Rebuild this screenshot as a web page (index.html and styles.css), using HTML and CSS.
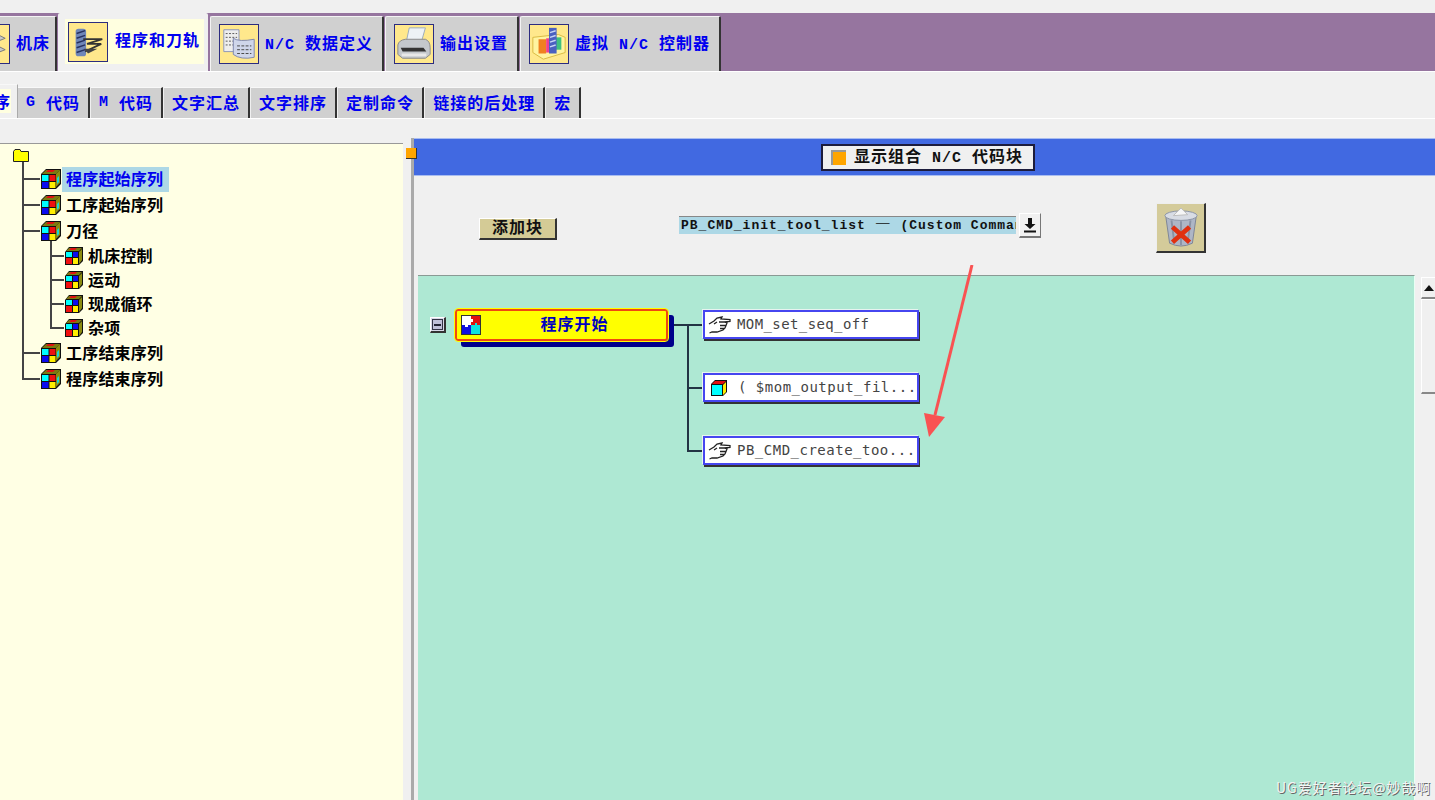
FILE: index.html
```html
<!DOCTYPE html>
<html lang="zh-CN">
<head>
    <meta charset="UTF-8">
    <meta name="viewport" content="width=device-width, initial-scale=1.0">
    <title>Post Builder</title>
    <link rel="stylesheet" href="styles.css">
</head>
<body>
    <svg class="defs" width="0" height="0">
        <symbol id="cube" viewBox="0 0 22 22">
            <path d="M1 6 6 1H21V16L16 21H1Z" fill="#111"/>
            <path d="M6 2h14l-4 4H2Z" fill="#7a7a10"/>
            <path d="M8 2h7l-2 2H6Z" fill="#e01010"/>
            <path d="M16 6l4-4v13l-4 4Z" fill="#8c8c10"/>
            <path d="M17 10l2-2v6l-2 2Z" fill="#18d8d8"/>
            <rect x="2" y="7" width="6.500" height="6" fill="#00ffff"/>
            <rect x="9.500" y="7" width="6" height="6" fill="#f01010"/>
            <rect x="2" y="14" width="6.500" height="6" fill="#0a0af0"/>
            <rect x="9.500" y="14" width="6" height="6" fill="#ffee00"/>
        </symbol>
        <symbol id="cube-small" viewBox="0 0 20 20">
            <path d="M1 6 5 1H19V15L15 19H1Z" fill="#111"/>
            <path d="M5 2h13l-3 3H2Z" fill="#7a7a10"/>
            <path d="M7 2h6l-2 2H5Z" fill="#e01010"/>
            <path d="M15 6l3-3v11l-3 4Z" fill="#8c8c10"/>
            <rect x="2" y="6" width="6" height="5" fill="#00ffff"/>
            <rect x="9" y="6" width="5" height="5" fill="#0a0af0"/>
            <rect x="2" y="12" width="6" height="6" fill="#f01010"/>
            <rect x="9" y="12" width="5" height="6" fill="#ffee00"/>
        </symbol>
        <symbol id="hand" viewBox="0 0 24 18">
            <path d="M1 8 6 5 9 2 14 1 13 3 22 3.500 22 5.500 16 6 19 7 18 9.500 17 12 15 14 9 16 4 16 1.500 17M11 6 16 6M12 9.500 18 9.500M12 12.500 16.500 12.500M6 8 9 6" fill="none" stroke="#222" stroke-width="1.300"/>
        </symbol>
    </svg>

    <div class="top-strip"></div>

    <div class="main-tabs">
        <div class="main-tab">
            <span class="tab-icon">
                <svg viewBox="0 0 40 40" width="38" height="38"><path d="M4 14 24 8 36 14 16 22ZM4 26 24 20 36 26 16 34Z" fill="#c8c8c8" stroke="#777"/></svg>
            </span>
            <span class="tab-text">机床</span>
        </div>
        <div class="main-tab active">
            <div class="tab-inner">
                <span class="tab-icon">
                    <svg viewBox="0 0 40 40" width="38" height="38">
                        <rect x="7" y="6" width="11" height="29" rx="3" fill="#6f86b8"/>
                        <path d="M8 11 17 8M8 16 17 13M8 21 17 18M8 26 17 23M8 31 17 28" stroke="#26305f" stroke-width="1.500"/>
                        <path d="M15 17H35L19 22H34M17 30 34 22" fill="none" stroke="#333" stroke-width="2"/>
                        <path d="M16 27 30 27 20 32Z" fill="#444"/>
                    </svg>
                </span>
                <span class="tab-text">程序和刀轨</span>
            </div>
        </div>
        <div class="main-tab">
            <span class="tab-icon">
                <svg viewBox="0 0 40 40" width="38" height="38">
                    <path d="M4 5H20V28H4Z" fill="#eee" stroke="#8a94b8"/>
                    <path d="M6 9h12M6 13h12M6 17h12M6 21h12" stroke="#555" stroke-dasharray="2 1.500"/>
                    <path d="M14 14Q20 18 36 15V34Q22 37 14 31Z" fill="#cfd6ea" stroke="#7c86ad"/>
                    <path d="M18 22h15M18 26h15M18 30h15" stroke="#444" stroke-dasharray="3 1.500"/>
                </svg>
            </span>
            <span class="tab-text"><span class="latin">N/C&nbsp;</span>数据定义</span>
        </div>
        <div class="main-tab">
            <span class="tab-icon">
                <svg viewBox="0 0 40 40" width="38" height="38">
                    <path d="M15 3H32L28 17H12Z" fill="#eef2f6" stroke="#9ab"/>
                    <path d="M3 21Q4 16 11 15H32Q37 17 37 24V31L32 35H8L3 31Z" fill="#c4c8cc" stroke="#888"/>
                    <path d="M6 24H30L33 28H8Z" fill="#333"/>
                    <path d="M7 30H33V33H7Z" fill="#e8e8e8"/>
                </svg>
            </span>
            <span class="tab-text">输出设置</span>
        </div>
        <div class="main-tab">
            <span class="tab-icon">
                <svg viewBox="0 0 40 40" width="38" height="38">
                    <path d="M3 13 30 10 37 13V29L14 36 3 29Z" fill="#fff4a0" stroke="#d8b840"/>
                    <rect x="9" y="15" width="8" height="15" fill="#f08020"/>
                    <rect x="17" y="14" width="5" height="15" fill="#f04090"/>
                    <rect x="27" y="13" width="6" height="13" fill="#40c080"/>
                    <rect x="20" y="3" width="8" height="27" fill="#4a60c0"/>
                    <path d="M21 8 27 6M21 13 27 11M21 18 27 16M21 23 27 21" stroke="#c8d4f4" stroke-width="1.500"/>
                </svg>
            </span>
            <span class="tab-text">虚拟<span class="latin">&nbsp;N/C&nbsp;</span>控制器</span>
        </div>
    </div>

    <div class="sub-tabs">
        <div class="sub-tab active"><span class="sub-inner">程序</span></div>
        <div class="sub-tab"><span class="latin">G&nbsp;</span>代码</div>
        <div class="sub-tab"><span class="latin">M&nbsp;</span>代码</div>
        <div class="sub-tab">文字汇总</div>
        <div class="sub-tab">文字排序</div>
        <div class="sub-tab">定制命令</div>
        <div class="sub-tab">链接的后处理</div>
        <div class="sub-tab">宏</div>
    </div>

    <div class="main">
        <div class="left-pane">
            <div class="folder"><svg viewBox="0 0 16 13" width="16" height="13"><path d="M.5 12.500V2.500L2 .5H7L8 2.500H15.500V12.500Z" fill="#ffff00" stroke="#222"/></svg></div>
            <ul class="tree">
                <li class="first">
                    <div class="row"><svg class="cube"><use href="#cube"/></svg><span class="label selected">程序起始序列</span></div>
                </li>
                <li>
                    <div class="row"><svg class="cube"><use href="#cube"/></svg><span class="label">工序起始序列</span></div>
                </li>
                <li>
                    <div class="row"><svg class="cube"><use href="#cube"/></svg><span class="label">刀径</span></div>
                    <ul class="tree sub">
                        <li class="first"><div class="row"><svg class="cube small"><use href="#cube-small"/></svg><span class="label">机床控制</span></div></li>
                        <li><div class="row"><svg class="cube small"><use href="#cube-small"/></svg><span class="label">运动</span></div></li>
                        <li><div class="row"><svg class="cube small"><use href="#cube-small"/></svg><span class="label">现成循环</span></div></li>
                        <li><div class="row"><svg class="cube small"><use href="#cube-small"/></svg><span class="label">杂项</span></div></li>
                    </ul>
                </li>
                <li>
                    <div class="row"><svg class="cube"><use href="#cube"/></svg><span class="label">工序结束序列</span></div>
                </li>
                <li>
                    <div class="row"><svg class="cube"><use href="#cube"/></svg><span class="label">程序结束序列</span></div>
                </li>
            </ul>
        </div>

        <div class="handle"></div>

        <div class="right-pane">
            <div class="header">
                <div class="check-btn"><span class="check-box"></span><span class="check-text">显示组合<span class="latin">&nbsp;N/C&nbsp;</span>代码块</span></div>
            </div>

            <div class="toolbar">
                <div class="add-btn">添加块</div>
                <div class="combo">PB_CMD_init_tool_list <span class="dash">—</span> (Custom Command)</div>
                <div class="combo-btn">
                    <svg viewBox="0 0 14 16" width="14" height="16"><path d="M5 1H9V7H12.500L7 12 1.500 7H5ZM1 13.500H13V15.500H1Z" fill="#111"/></svg>
                </div>
                <div class="trash-btn">
                    <svg viewBox="0 0 40 44" width="38" height="42">
                        <path d="M4 10 8 38Q20 44 32 38L36 10Z" fill="#aeb6c6" stroke="#7c8496"/>
                        <path d="M10 14 13 38M20 15V40M30 14 27 38" stroke="#8a92a4" stroke-width="2"/>
                        <ellipse cx="20" cy="9" rx="17" ry="5" fill="#d8dce4" stroke="#8a92a4"/>
                        <path d="M12 9 20 1 27 8Z" fill="#f6f6f6" stroke="#bbb"/>
                        <path d="M11 21 29 37M29 21 11 37" stroke="#e03010" stroke-width="5"/>
                    </svg>
                </div>
            </div>

            <div class="work">
                <div class="canvas">
                    <div class="collapse"><span></span></div>
                    <div class="block">
                        <svg class="block-icon" viewBox="0 0 20 20" width="20" height="20">
                            <rect width="20" height="20" fill="#333"/>
                            <path d="M1 1H10V4H12V7H10V10H7V12H4V10H1Z" fill="#fff"/>
                            <path d="M10 1H19V10H16V8H14V10H10V7H12V4H10Z" fill="#e01010"/>
                            <path d="M1 10H4V12H7V10H10V19H1Z" fill="#1010e0"/>
                            <path d="M10 10H14V8H16V10H19V19H10Z" fill="#10e0e0"/>
                        </svg>
                        <span class="block-title">程序开始</span>
                    </div>
                    <ul class="nodes">
                        <li><div class="node"><svg class="node-icon" width="24" height="18"><use href="#hand"/></svg><span class="node-text">MOM_set_seq_off</span></div></li>
                        <li><div class="node"><svg class="node-icon node-cube" viewBox="0 0 18 18" width="18" height="18"><path d="M1 5 5 1H17V13L13 17H1Z" fill="#111"/><path d="M5 2H16L13 5H2Z" fill="#e01010"/><path d="M13 6 16 3V13L13 16Z" fill="#ffee00"/><rect x="2" y="6" width="10" height="10" fill="#00ffff"/></svg><span class="node-text wide">( $mom_output_fil...</span></div></li>
                        <li><div class="node"><svg class="node-icon" width="24" height="18"><use href="#hand"/></svg><span class="node-text wide">PB_CMD_create_too...</span></div></li>
                    </ul>
                </div>
                <div class="scrollbar">
                    <div class="scroll-up"><svg viewBox="0 0 10 6" width="10" height="6"><path d="M5 0 10 6H0Z" fill="#111"/></svg></div>
                    <div class="scroll-thumb"></div>
                </div>
            </div>
        </div>
    </div>

    <svg class="arrow" viewBox="0 0 60 180" width="60" height="180">
        <path d="M52 0 15 150" stroke="#f95252" stroke-width="3" fill="none"/>
        <path d="M9 172 4 148 25 152Z" fill="#f95252"/>
    </svg>
    <div class="watermark">UG爱好者论坛@妙哉啊</div>
</body>
</html>
```

FILE: styles.css
```css
html, body {
    margin: 0;
    height: 800px;
    overflow: hidden;
}
body {
    position: relative;
    background-color: #f0f0f0;
    font-family: "Liberation Mono", "Noto Sans CJK SC", monospace;
    font-size: 16px;
    font-weight: bold;
}
ul {
    list-style: none;
    margin: 0;
    padding: 0;
}
.defs {
    position: absolute;
}
.top-strip {
    height: 13px;
}
.latin {
    font-size: 15px;
}

/* top tabs */
.main-tabs {
    display: flex;
    align-items: flex-end;
    height: 58px;
    margin-left: -39px;
    background-color: #96759f;
    box-shadow: 0 1px 0 #fff;
}
.main-tab {
    display: flex;
    align-items: center;
    gap: 6px;
    height: 54px;
    margin-right: 1px;
    padding: 0 9px 0 8px;
    background-color: #d0d0d0;
    border-top: 1px solid #f4f4f4;
    border-left: 1px solid #f4f4f4;
    border-right: 2px solid #333;
    border-radius: 2px 2px 0 0;
    color: #0000f0;
    letter-spacing: 1px;
    white-space: nowrap;
}
.main-tab:first-child {
    padding-right: 5px;
}
.tab-text {
    padding-bottom: 4px;
}
.main-tab.active {
    height: 58px;
    margin-right: 2px;
    padding: 0 4px 0 7px;
    background-color: #f0f0f0;
    border: none;
    box-sizing: border-box;
}
.tab-inner {
    display: flex;
    align-items: center;
    gap: 7px;
    height: 45px;
    margin-bottom: 1px;
    padding: 0 4px 0 3px;
    background-color: #ffffe0;
}
.active .tab-text {
    padding-bottom: 6px;
}
.tab-icon {
    display: flex;
    align-items: center;
    justify-content: center;
    flex: none;
    width: 38px;
    height: 38px;
    background-color: #ffe88c;
    border: 1px solid #2c2c80;
}

/* second row */
.sub-tabs {
    display: flex;
    align-items: flex-end;
    height: 32px;
    margin-top: 15px;
    margin-left: -27px;
    border-bottom: 1px solid #fff;
}
.sub-tab {
    display: flex;
    align-items: center;
    height: 28px;
    margin-right: 1px;
    padding: 0 8px 2px 8px;
    background-color: #d0d0d0;
    border-top: 1px solid #f8f8f8;
    border-right: 2px solid #333;
    color: #0000f0;
    letter-spacing: 1px;
    white-space: nowrap;
}
.sub-tab.active {
    height: 31px;
    margin-right: 0;
    padding: 0 6px 2px 4px;
    background-color: #f0f0f0;
    border-right: 1px solid #aaa;
}
.sub-inner {
    background-color: #ffffe0;
}

/* panes */
.main {
    position: relative;
    display: flex;
    margin-top: 19px;
    height: 662px;
}
.left-pane {
    flex: none;
    box-sizing: border-box;
    width: 403px;
    margin-top: 5px;
    padding-top: 5px;
    background-color: #ffffe4;
    border-top: 1px solid #999;
}
.folder {
    height: 13px;
    padding-left: 13px;
}
.folder svg {
    display: block;
}
.tree {
    margin-left: 22px;
}
.tree li {
    background: linear-gradient(#444, #444) 0 0 / 2px 100% no-repeat;
}
.tree li:last-child {
    background-size: 2px 14px;
}
.tree li.first {
    padding-top: 4px;
}
.row {
    display: flex;
    align-items: center;
    height: 26px;
    padding-left: 18px;
    background: linear-gradient(#444, #444) 0 50% / 18px 2px no-repeat;
}
.cube {
    flex: none;
    width: 22px;
    height: 22px;
}
.label {
    padding: 4px 6px 0 4px;
    line-height: 21px;
    letter-spacing: 0.200px;
    white-space: nowrap;
}
.selected {
    background-color: #add8e6;
    color: #0000f0;
}
.tree.sub {
    margin-top: -4px;
    margin-left: 28px;
}
.tree.sub li:last-child {
    background-size: 2px 13px;
}
.tree.sub .row {
    height: 24px;
    padding-left: 14px;
    background-size: 14px 2px;
}
.tree.sub .cube {
    width: 20px;
    height: 20px;
}
.handle {
    position: absolute;
    left: 406px;
    top: 10px;
    width: 10px;
    height: 10px;
    background-color: #ffa500;
    border-right: 1px solid #333;
    border-bottom: 1px solid #333;
    z-index: 2;
}
.right-pane {
    flex: none;
    width: 1024px;
    margin-left: 8px;
    border-left: 3px solid #aaa;
    box-sizing: border-box;
}
.header {
    display: flex;
    align-items: center;
    height: 38px;
    padding-left: 407px;
    background-color: #4169e1;
    border-top: 1px solid #a8bcf0;
    border-bottom: 1px solid #a8bcf0;
    box-sizing: border-box;
}
.check-btn {
    display: flex;
    align-items: center;
    box-sizing: border-box;
    width: 214px;
    height: 27px;
    padding-left: 8px;
    background-color: #f0f0f0;
    border: 2px solid #1c1c3c;
    color: #111;
    letter-spacing: 1px;
    white-space: nowrap;
}
.check-text {
    padding-bottom: 4px;
}
.check-box {
    flex: none;
    box-sizing: border-box;
    width: 15px;
    height: 15px;
    margin-right: 8px;
    background-color: #ffa500;
    box-shadow: inset 2px 2px 0 #999;
}
.toolbar {
    display: flex;
    align-items: flex-start;
    height: 99px;
    padding-left: 65px;
    box-sizing: border-box;
}
.add-btn {
    box-sizing: border-box;
    width: 78px;
    height: 22px;
    margin-top: 42px;
    background-color: #d4cb96;
    border-top: 1px solid #fff;
    border-left: 1px solid #fff;
    border-right: 2px solid #333;
    border-bottom: 2px solid #333;
    line-height: 20px;
    letter-spacing: 1px;
    text-align: center;
    color: #111;
}
.combo {
    box-sizing: border-box;
    width: 337px;
    height: 18px;
    margin-top: 40px;
    margin-left: 122px;
    padding-left: 2px;
    overflow: hidden;
    background-color: #add8e6;
    border-top: 1px solid #888;
    font-size: 13px;
    line-height: 17px;
    letter-spacing: 1px;
    white-space: nowrap;
    color: #111;
}
.dash {
    font-family: "Noto Sans CJK SC", sans-serif;
    font-size: 16px;
    line-height: 0;
}
.combo-btn {
    display: flex;
    align-items: center;
    justify-content: center;
    box-sizing: border-box;
    width: 22px;
    height: 25px;
    margin-top: 37px;
    margin-left: 3px;
    border-top: 1px solid #fff;
    border-left: 1px solid #fff;
    border-right: 1px solid #777;
    border-bottom: 2px solid #777;
}
.trash-btn {
    display: flex;
    align-items: center;
    justify-content: center;
    box-sizing: border-box;
    width: 50px;
    height: 50px;
    margin-top: 27px;
    margin-left: 115px;
    background-color: #d4cb9a;
    border-top: 1px solid #eee;
    border-left: 1px solid #eee;
    border-right: 2px solid #333;
    border-bottom: 2px solid #333;
}

/* block canvas */
.work {
    display: flex;
    gap: 6px;
    margin-left: 4px;
}
.canvas {
    display: flex;
    align-items: flex-start;
    box-sizing: border-box;
    flex: none;
    width: 997px;
    height: 525px;
    padding: 33px 0 0 12px;
    background-color: #aee8d3;
    border-top: 1px solid #8a9a94;
    border-right: 1px solid #e8fff4;
}
.collapse {
    display: flex;
    align-items: center;
    justify-content: center;
    flex: none;
    box-sizing: border-box;
    width: 16px;
    height: 16px;
    margin-top: 8px;
    margin-right: 9px;
    background-color: #d8d8e8;
    border-top: 1px solid #fff;
    border-left: 1px solid #fff;
    border-right: 2px solid #333;
    border-bottom: 2px solid #333;
}
.collapse span {
    width: 11px;
    height: 11px;
    border: 1px solid #334;
    background: #c0c0d8 linear-gradient(#223, #223) 50% 50% / 7px 2px no-repeat;
    box-sizing: border-box;
}
.block {
    display: flex;
    align-items: center;
    flex: none;
    box-sizing: border-box;
    width: 213px;
    height: 32px;
    padding-left: 4px;
    background-color: #ffff00;
    border: 2px solid #f04810;
    outline: 1px solid #ffff00;
    border-radius: 3px;
    box-shadow: 6px 6px 0 #00008b;
    color: #0000c0;
}
.block-icon {
    flex: none;
}
.block-title {
    flex: 1;
    padding-left: 2px;
    padding-bottom: 5px;
    text-align: center;
    letter-spacing: 1px;
}
.nodes {
    margin-top: 1px;
    margin-left: 6px;
}
.nodes li {
    height: 63px;
    padding-left: 29px;
    background:
        linear-gradient(#234, #234) 13px 0 / 2px 100% no-repeat,
        linear-gradient(#234, #234) 13px 14px / 16px 2px no-repeat;
}
.nodes li:first-child {
    background:
        linear-gradient(#234, #234) 13px 14px / 2px 100% no-repeat,
        linear-gradient(#234, #234) 0 14px / 29px 2px no-repeat;
}
.nodes li:last-child {
    height: 30px;
    background:
        linear-gradient(#234, #234) 13px 0 / 2px 15px no-repeat,
        linear-gradient(#234, #234) 13px 14px / 16px 2px no-repeat;
}
.node {
    display: flex;
    align-items: center;
    box-sizing: border-box;
    width: 216px;
    height: 29px;
    padding-left: 3px;
    background-color: #fff;
    border: 2px solid #4646f0;
    box-shadow: -1px -1px 0 #e8f4f0, 1px 2px 0 #333;
    font-family: "DejaVu Sans Mono", monospace;
    font-size: 14px;
    font-weight: normal;
    color: #444;
    white-space: nowrap;
    letter-spacing: 0.400px;
}
.node-text {
    padding-bottom: 2px;
}
.node-icon {
    flex: none;
    margin-right: 5px;
}
.node-cube {
    margin-left: 2px;
    margin-right: 10px;
}
.node .wide {
    letter-spacing: 0.500px;
}
.scrollbar {
    width: 14px;
    margin-top: 2px;
}
.scroll-up {
    display: flex;
    align-items: center;
    justify-content: center;
    height: 19px;
    border-top: 1px solid #fff;
    border-left: 1px solid #fff;
    border-bottom: 2px solid #888;
}
.scroll-thumb {
    height: 92px;
    border-top: 1px solid #fff;
    border-left: 1px solid #fff;
    border-bottom: 2px solid #888;
}

/* overlays */
.arrow {
    position: absolute;
    left: 920px;
    top: 265px;
}
.watermark {
    position: absolute;
    right: 4px;
    bottom: 3px;
    font-family: "Noto Sans CJK SC", sans-serif;
    font-size: 14px;
    font-weight: normal;
    letter-spacing: 0.900px;
    color: #f4f4f4;
    text-shadow: 1px 1px 0 #666;
}
```
